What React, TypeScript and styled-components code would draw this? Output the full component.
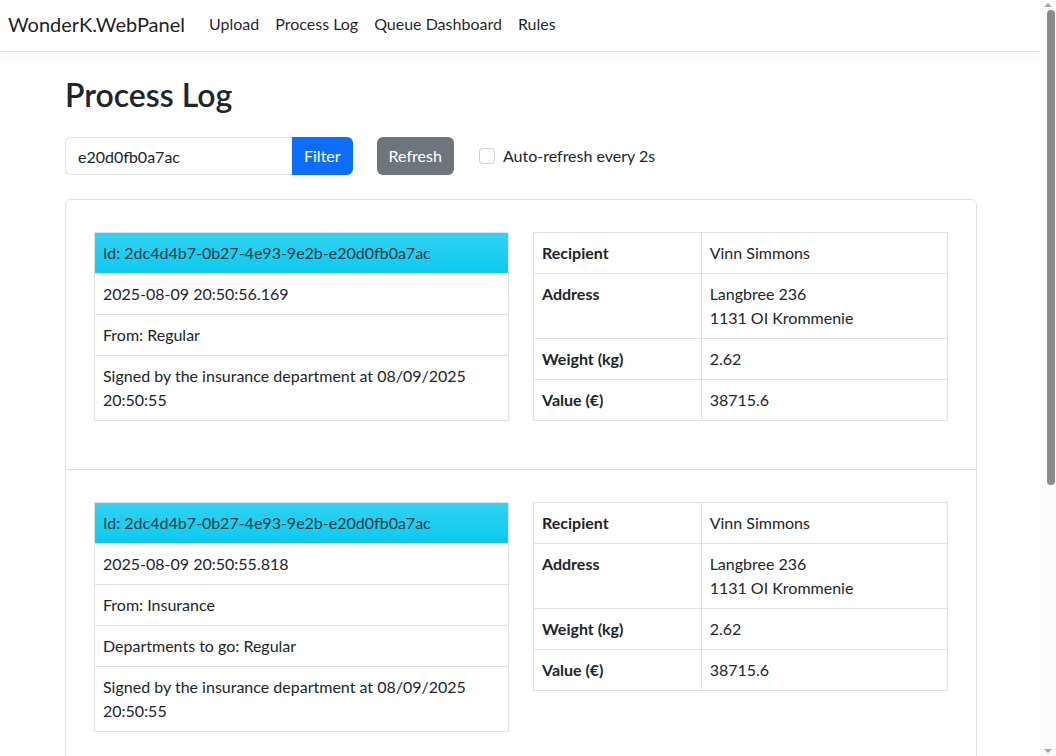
import React from "react";
import styled, { createGlobalStyle } from "styled-components";

const Global = createGlobalStyle`
  * { box-sizing: border-box; }
  html, body { margin: 0; padding: 0; background: #fff; }
  body {
    font-family: Lato, "Segoe UI", "Liberation Sans", sans-serif;
    font-size: 16px;
    line-height: 1.5;
    color: #212529;
  }
`;

const Page = styled.div`
  width: 1040px;
`;

const Navbar = styled.nav`
  height: 52px;
  display: flex;
  align-items: center;
  padding: 0 8px 3px 8px;
  background: #fff;
  border-bottom: 1px solid #dcdcdc;
  box-shadow: 0 4px 12px rgba(0, 0, 0, 0.05);
`;

const Brand = styled.a`
  font-size: 20px;
  line-height: 30px;
  color: rgba(0, 0, 0, 0.9);
  margin-right: 16px;
  text-decoration: none;
`;

const NavLink = styled.a`
  font-size: 16px;
  line-height: 24px;
  padding: 0 8px;
  color: rgba(0, 0, 0, 0.88);
  text-decoration: none;
`;

const Main = styled.main`
  width: 912px;
  margin: 0 0 0 65px;
  padding: 22px 0 40px;
`;

const Title = styled.h1`
  margin: 0 0 22px;
  font-size: 32px;
  font-weight: 600;
  line-height: 41px;
  color: #212529;
`;

const Toolbar = styled.div`
  display: flex;
  align-items: center;
  height: 38px;
  margin-bottom: 24px;
`;

const InputGroup = styled.div`
  display: flex;
  height: 38px;
`;

const Input = styled.input`
  width: 227px;
  height: 38px;
  padding: 6px 12px;
  font: inherit;
  color: #212529;
  border: 1px solid #dee2e6;
  border-right: none;
  border-radius: 6px 0 0 6px;
  outline: none;
`;

const Button = styled.button<{ $variant: "primary" | "secondary"; $joined?: boolean }>`
  height: 38px;
  padding: 6px 12px;
  font: inherit;
  color: #fff;
  border: none;
  background: ${(p) => (p.$variant === "primary" ? "#0d6efd" : "#6c757d")};
  border-radius: ${(p) => (p.$joined ? "0 6px 6px 0" : "6px")};
  margin-left: ${(p) => (p.$joined ? "0" : "24px")};
  cursor: pointer;
`;

const CheckLabel = styled.label`
  display: flex;
  align-items: center;
  gap: 8px;
  margin-left: 25px;
  color: #212529;
`;

const CheckBox = styled.span`
  display: inline-block;
  width: 16px;
  height: 16px;
  border: 1px solid #c8ccd0;
  border-radius: 4px;
  background: #fff;
`;

const Card = styled.div`
  border: 1px solid #dfdfdf;
  border-radius: 6px;
`;

const Entry = styled.section`
  display: grid;
  grid-template-columns: 1fr 1fr;
  column-gap: 24px;
  align-items: start;
  padding: 32px 28px 48px;
  & + & {
    border-top: 1px solid #dfdfdf;
  }
`;

const List = styled.ul`
  list-style: none;
  margin: 0;
  padding: 0;
  border: 1px solid #dee2e6;
`;

const Item = styled.li<{ $info?: boolean }>`
  padding: 8px 8px;
  line-height: 24px;
  color: ${(p) => (p.$info ? "#0f3a40" : "#212529")};
  background: ${(p) =>
    p.$info
      ? "linear-gradient(180deg, rgba(255,255,255,0.15), rgba(255,255,255,0)) #0dcaf0"
      : "#fff"};
  & + & {
    border-top: 1px solid #dee2e6;
  }
`;

const Table = styled.table`
  width: 100%;
  border-collapse: collapse;
  border: 1px solid #dee2e6;
`;

const Th = styled.th`
  width: 40.5%;
  padding: 8px 8px;
  text-align: left;
  vertical-align: top;
  font-weight: 700;
  line-height: 24px;
  border: 1px solid #dee2e6;
  color: #212529;
`;

const Td = styled.td`
  padding: 8px 8px;
  vertical-align: top;
  line-height: 24px;
  border: 1px solid #dee2e6;
  color: #212529;
`;

/* Window scrollbar drawn over the page's right edge */
const ScrollTrack = styled.div`
  position: fixed;
  top: 0;
  right: 0;
  width: 16px;
  height: 100vh;
  background: #fafafa;
  display: flex;
  flex-direction: column;
  align-items: center;
`;

const ScrollArrow = styled.div<{ $down?: boolean }>`
  width: 0;
  height: 0;
  margin: ${(p) => (p.$down ? "auto 0 3px" : "3px 0 0")};
  border-left: 4px solid transparent;
  border-right: 4px solid transparent;
  ${(p) =>
    p.$down ? "border-top: 4px solid #a3a3a3;" : "border-bottom: 4px solid #a3a3a3;"}
`;

const ScrollThumb = styled.div`
  width: 8px;
  height: 475px;
  margin-top: 3px;
  margin-left: 5px;
  border-radius: 4px;
  background: #8a8a8a;
`;

type Log = { time: string; lines: string[] };

const logs: Log[] = [
  {
    time: "2025-08-09 20:50:56.169",
    lines: ["From: Regular", "Signed by the insurance department at 08/09/2025 20:50:55"],
  },
  {
    time: "2025-08-09 20:50:55.818",
    lines: [
      "From: Insurance",
      "Departments to go: Regular",
      "Signed by the insurance department at 08/09/2025 20:50:55",
    ],
  },
  {
    time: "2025-08-09 20:50:55.402",
    lines: ["From: Mail", "Departments to go: Insurance, Regular"],
  },
];

export default function App() {
  return (
    <>
      <Global />
      <Page>
        <Navbar>
          <Brand href="#">WonderK.WebPanel</Brand>
          <NavLink href="#">Upload</NavLink>
          <NavLink href="#">Process Log</NavLink>
          <NavLink href="#">Queue Dashboard</NavLink>
          <NavLink href="#">Rules</NavLink>
        </Navbar>
        <Main>
          <Title>Process Log</Title>
          <Toolbar>
            <InputGroup>
              <Input defaultValue="e20d0fb0a7ac" />
              <Button $variant="primary" $joined>
                Filter
              </Button>
            </InputGroup>
            <Button $variant="secondary">Refresh</Button>
            <CheckLabel>
              <CheckBox />
              Auto-refresh every 2s
            </CheckLabel>
          </Toolbar>
          <Card>
            {logs.map((log, i) => (
              <Entry key={i}>
                <List>
                  <Item $info>Id: 2dc4d4b7-0b27-4e93-9e2b-e20d0fb0a7ac</Item>
                  <Item>{log.time}</Item>
                  {log.lines.map((l, j) => (
                    <Item key={j}>{l}</Item>
                  ))}
                </List>
                <Table>
                  <tbody>
                    <tr>
                      <Th>Recipient</Th>
                      <Td>Vinn Simmons</Td>
                    </tr>
                    <tr>
                      <Th>Address</Th>
                      <Td>
                        Langbree 236
                        <br />
                        1131 OI Krommenie
                      </Td>
                    </tr>
                    <tr>
                      <Th>Weight (kg)</Th>
                      <Td>2.62</Td>
                    </tr>
                    <tr>
                      <Th>Value (€)</Th>
                      <Td>38715.6</Td>
                    </tr>
                  </tbody>
                </Table>
              </Entry>
            ))}
          </Card>
        </Main>
      </Page>
      <ScrollTrack>
        <ScrollArrow />
        <ScrollThumb />
        <ScrollArrow $down />
      </ScrollTrack>
    </>
  );
}
